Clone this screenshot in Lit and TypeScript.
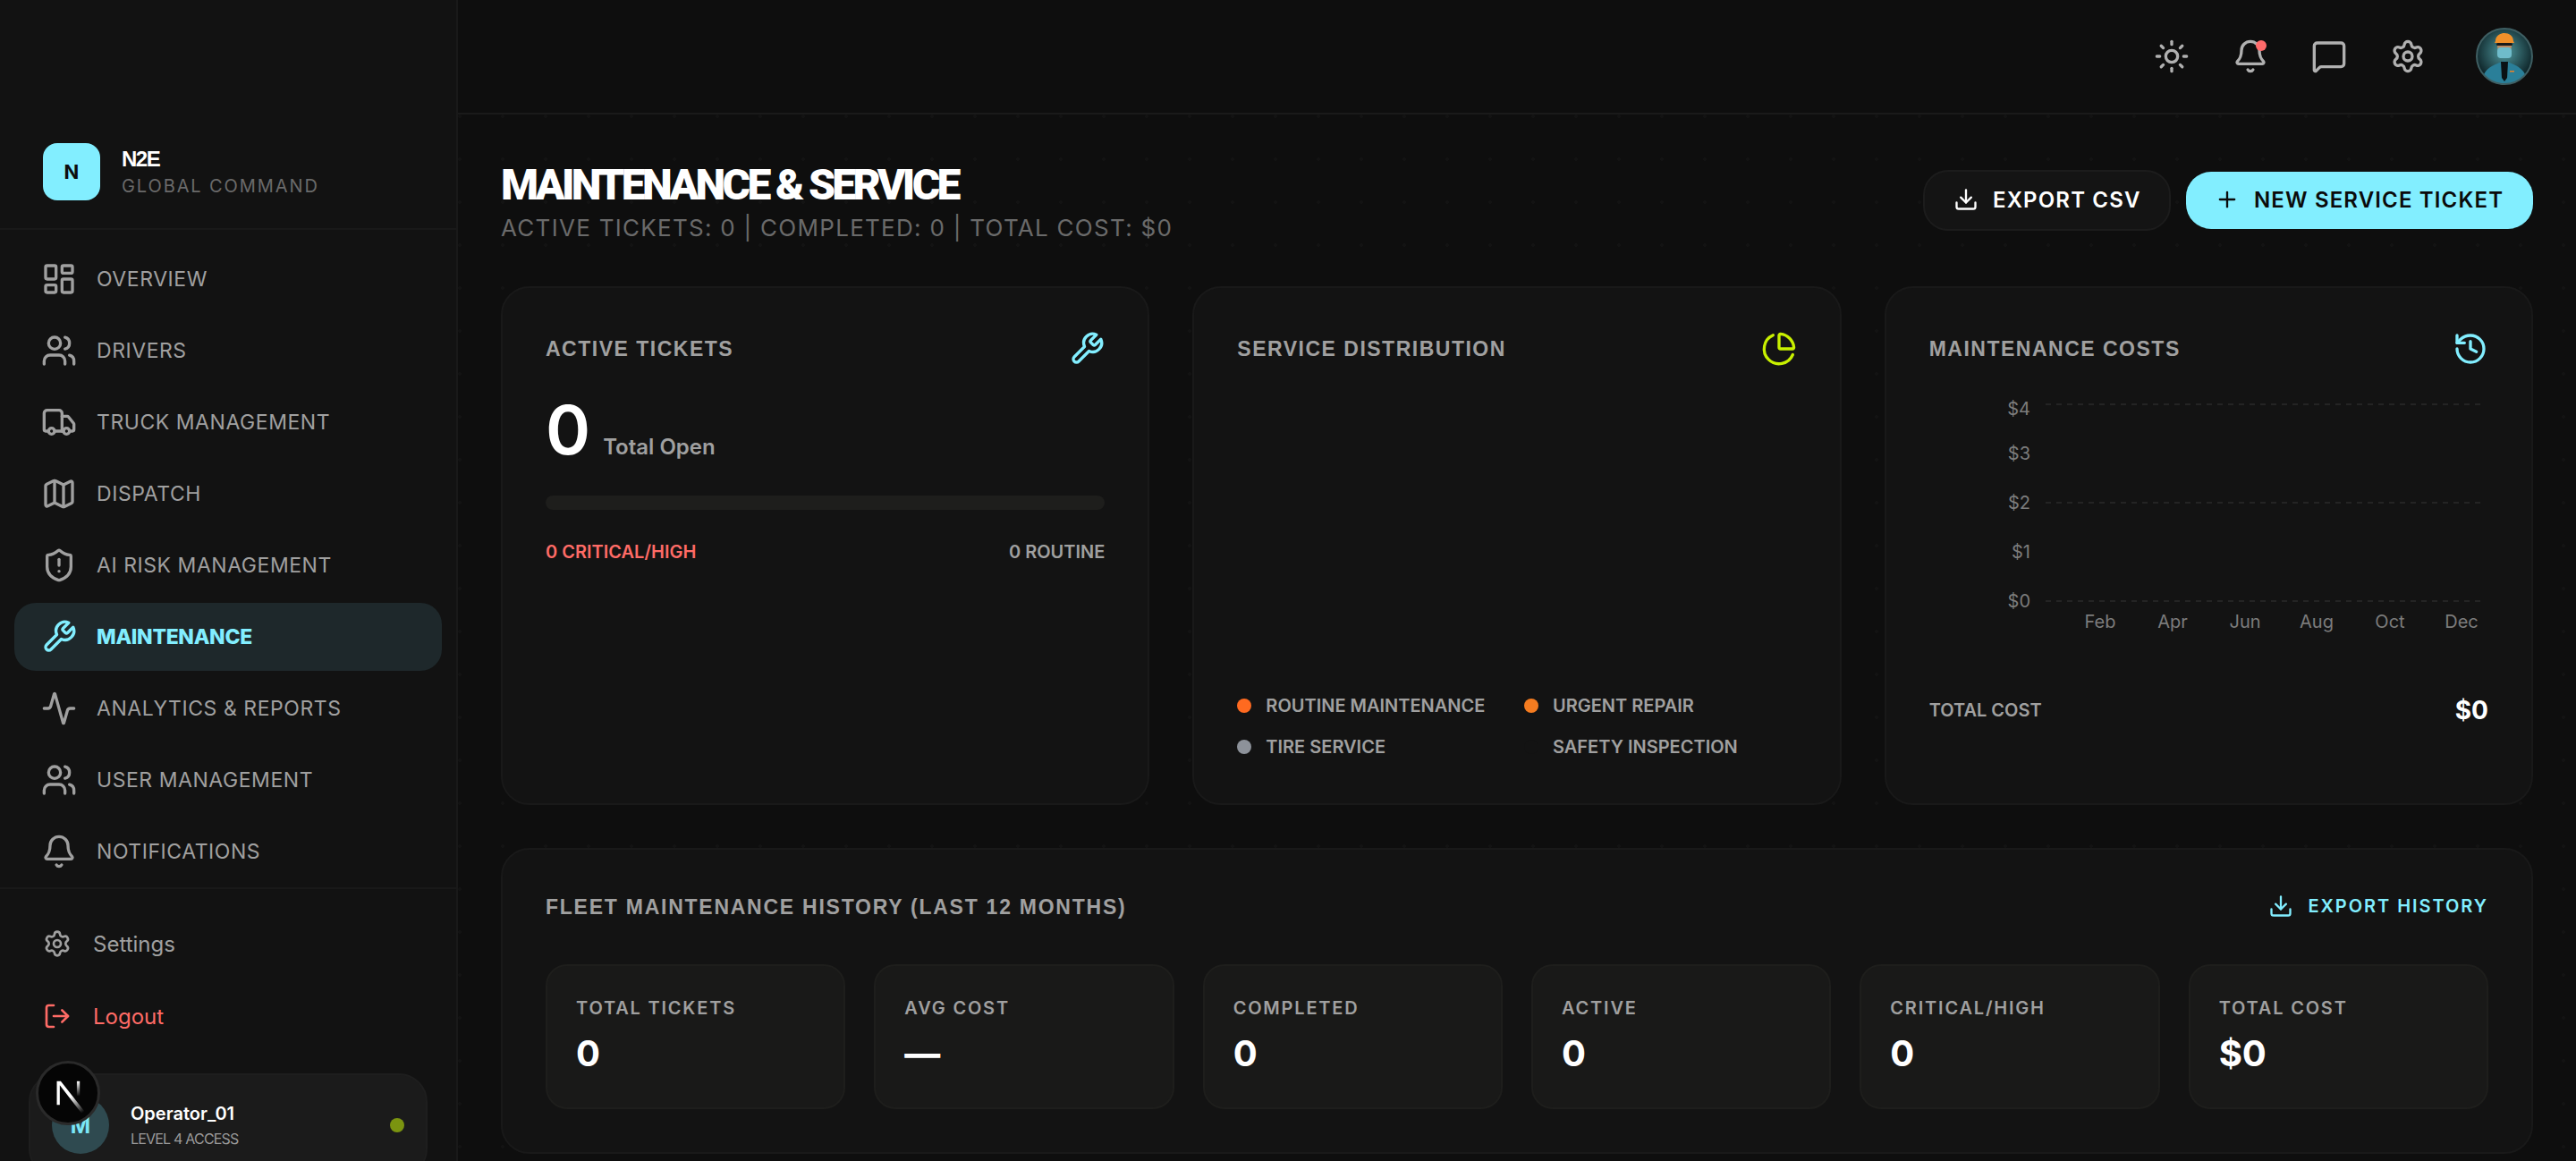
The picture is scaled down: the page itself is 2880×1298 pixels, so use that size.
import { LitElement, html, css, svg } from 'lit';
import { customElement } from 'lit/decorators.js';

const icons = {
  dashboard: svg`<rect width="7" height="9" x="3" y="3" rx="1"/><rect width="7" height="5" x="14" y="3" rx="1"/><rect width="7" height="9" x="14" y="12" rx="1"/><rect width="7" height="5" x="3" y="16" rx="1"/>`,
  users: svg`<path d="M16 21v-2a4 4 0 0 0-4-4H6a4 4 0 0 0-4 4v2"/><path d="M16 3.128a4 4 0 0 1 0 7.744"/><path d="M22 21v-2a4 4 0 0 0-3-3.87"/><circle cx="9" cy="7" r="4"/>`,
  truck: svg`<path d="M14 18V6a2 2 0 0 0-2-2H4a2 2 0 0 0-2 2v11a1 1 0 0 0 1 1h2"/><path d="M15 18H9"/><path d="M19 18h2a1 1 0 0 0 1-1v-3.65a1 1 0 0 0-.22-.624l-3.48-4.35A1 1 0 0 0 17.52 8H14"/><circle cx="17" cy="18" r="2"/><circle cx="7" cy="18" r="2"/>`,
  map: svg`<path d="M14.106 5.553a2 2 0 0 0 1.788 0l3.659-1.83A1 1 0 0 1 21 4.619v12.764a1 1 0 0 1-.553.894l-4.553 2.277a2 2 0 0 1-1.788 0l-4.212-2.106a2 2 0 0 0-1.788 0l-3.659 1.83A1 1 0 0 1 3 19.381V6.618a1 1 0 0 1 .553-.894l4.553-2.277a2 2 0 0 1 1.788 0z"/><path d="M15 5.764v15"/><path d="M9 3.236v15"/>`,
  shield: svg`<path d="M20 13c0 5-3.5 7.5-7.66 8.95a1 1 0 0 1-.67-.01C7.5 20.5 4 18 4 13V6a1 1 0 0 1 1-1c2 0 4.5-1.2 6.24-2.72a1.17 1.17 0 0 1 1.52 0C14.51 3.81 17 5 19 5a1 1 0 0 1 1 1z"/><path d="M12 8v4"/><path d="M12 16h.01"/>`,
  wrench: svg`<path d="M14.7 6.3a1 1 0 0 0 0 1.4l1.6 1.6a1 1 0 0 0 1.4 0l3.77-3.77a6 6 0 0 1-7.94 7.94l-6.91 6.91a2.12 2.12 0 0 1-3-3l6.91-6.91a6 6 0 0 1 7.94-7.94l-3.76 3.76z"/>`,
  activity: svg`<path d="M22 12h-2.48a2 2 0 0 0-1.93 1.46l-2.35 8.36a.25.25 0 0 1-.48 0L9.24 2.18a.25.25 0 0 0-.48 0l-2.35 8.36A2 2 0 0 1 4.49 12H2"/>`,
  bell: svg`<path d="M10.268 21a2 2 0 0 0 3.464 0"/><path d="M3.262 15.326A1 1 0 0 0 4 17h16a1 1 0 0 0 .74-1.673C19.41 13.956 18 12.499 18 8A6 6 0 0 0 6 8c0 4.499-1.411 5.956-2.738 7.326"/>`,
  settings: svg`<path d="M9.671 4.136a2.34 2.34 0 0 1 4.659 0 2.34 2.34 0 0 0 3.319 1.915 2.34 2.34 0 0 1 2.33 4.033 2.34 2.34 0 0 0 0 3.831 2.34 2.34 0 0 1-2.33 4.033 2.34 2.34 0 0 0-3.319 1.915 2.34 2.34 0 0 1-4.659 0 2.34 2.34 0 0 0-3.32-1.915 2.34 2.34 0 0 1-2.33-4.033 2.34 2.34 0 0 0 0-3.831A2.34 2.34 0 0 1 6.35 6.051a2.34 2.34 0 0 0 3.32-1.915"/><circle cx="12" cy="12" r="3"/>`,
  logout: svg`<path d="m16 17 5-5-5-5"/><path d="M21 12H9"/><path d="M9 21H5a2 2 0 0 1-2-2V5a2 2 0 0 1 2-2h4"/>`,
  sun: svg`<circle cx="12" cy="12" r="4"/><path d="M12 2v2"/><path d="M12 20v2"/><path d="m4.93 4.93 1.41 1.41"/><path d="m17.66 17.66 1.41 1.41"/><path d="M2 12h2"/><path d="M20 12h2"/><path d="m6.34 17.66-1.41 1.41"/><path d="m19.07 4.93-1.41 1.41"/>`,
  message: svg`<path d="M22 17a2 2 0 0 1-2 2H6.828a2 2 0 0 0-1.414.586l-2.202 2.202A.71.71 0 0 1 2 21.286V5a2 2 0 0 1 2-2h16a2 2 0 0 1 2 2z"/>`,
  download: svg`<path d="M12 15V3"/><path d="M21 15v4a2 2 0 0 1-2 2H5a2 2 0 0 1-2-2v-4"/><path d="m7 10 5 5 5-5"/>`,
  plus: svg`<path d="M5 12h14"/><path d="M12 5v14"/>`,
  pie: svg`<path d="M21 12c.552 0 1.005-.449.95-.998a10 10 0 0 0-8.953-8.951c-.55-.055-.998.398-.998.95v8a1 1 0 0 0 1 1z"/><path d="M21.21 15.89A10 10 0 1 1 8 2.83"/>`,
  history: svg`<path d="M3 12a9 9 0 1 0 9-9 9.75 9.75 0 0 0-6.74 2.74L3 8"/><path d="M3 3v5h5"/><path d="M12 7v5l4 2"/>`,
};

const icon = (name: keyof typeof icons, size: number) => html`<svg
  class="icon"
  width=${size}
  height=${size}
  viewBox="0 0 24 24"
  fill="none"
  stroke="currentColor"
  stroke-width="2"
  stroke-linecap="round"
  stroke-linejoin="round"
>${icons[name]}</svg>`;

const navItems: { label: string; icon: keyof typeof icons; active?: boolean }[] = [
  { label: 'Overview', icon: 'dashboard' },
  { label: 'Drivers', icon: 'users' },
  { label: 'Truck Management', icon: 'truck' },
  { label: 'Dispatch', icon: 'map' },
  { label: 'AI Risk Management', icon: 'shield' },
  { label: 'Maintenance', icon: 'wrench', active: true },
  { label: 'Analytics & Reports', icon: 'activity' },
  { label: 'User Management', icon: 'users' },
  { label: 'Notifications', icon: 'bell' },
];

const legend = [
  { label: 'Routine Maintenance', color: '#ff6a20' },
  { label: 'Urgent Repair', color: '#f57c20' },
  { label: 'Tire Service', color: '#8d929a' },
  { label: 'Safety Inspection', color: '#131313' },
];

const stats = [
  { label: 'Total Tickets', value: '0' },
  { label: 'Avg Cost', value: '—' },
  { label: 'Completed', value: '0' },
  { label: 'Active', value: '0' },
  { label: 'Critical/High', value: '0' },
  { label: 'Total Cost', value: '$0' },
];

const yTicks = [
  { label: '$4', y: 25 },
  { label: '$3', y: 75 },
  { label: '$2', y: 130 },
  { label: '$1', y: 185 },
  { label: '$0', y: 240 },
];
const months = [
  { label: 'Feb', x: 191 },
  { label: 'Apr', x: 272 },
  { label: 'Jun', x: 353 },
  { label: 'Aug', x: 433 },
  { label: 'Oct', x: 515 },
  { label: 'Dec', x: 595 },
];

@customElement('app-root')
export class AppRoot extends LitElement {
  static styles = css`
    :host {
      display: block;
      position: relative;
      height: 100vh;
      overflow: hidden;
      background: #0e0e0e;
      color: #fff;
      font-family: Inter, "Liberation Sans", sans-serif;
    }

    .layout {
      display: flex;
      height: 100%;
    }

    /* sidebar */
    .sidebar {
      width: 512px;
      flex: none;
      box-sizing: border-box;
      background: #121212;
      border-right: 2px solid #191919;
      display: flex;
      flex-direction: column;
      overflow: hidden;
    }
    .brand {
      display: flex;
      align-items: center;
      gap: 24px;
      padding: 160px 48px 31px;
      border-bottom: 2px solid #191919;
    }
    .brand-logo {
      width: 64px;
      height: 64px;
      border-radius: 16px;
      background: #82eeff;
      color: #0d0d0d;
      display: flex;
      align-items: center;
      justify-content: center;
      font-size: 22px;
      font-weight: 700;
    }
    .brand-name {
      font-family: "Liberation Sans", sans-serif;
      font-size: 24px;
      font-weight: 700;
      line-height: 28px;
      letter-spacing: -1.5px;
    }
    .brand-sub {
      font-size: 20px;
      line-height: 26px;
      letter-spacing: 1.9px;
      color: #6a6a6a;
      margin-top: 3px;
    }
    .nav {
      display: flex;
      flex-direction: column;
      gap: 4px;
      padding: 17px 16px 2px;
      border-bottom: 2px solid #191919;
    }
    .nav-item {
      display: flex;
      align-items: center;
      gap: 22px;
      height: 76px;
      padding-left: 30px;
      border-radius: 24px;
      color: #a0a0a0;
      font-size: 23px;
      letter-spacing: 0.55px;
      text-transform: uppercase;
    }
    .nav-item.active {
      background: #1e282b;
      color: #82eeff;
      font-weight: 800;
      letter-spacing: -0.3px;
    }
    .foot {
      padding: 23px 32px 0;
      display: flex;
      flex-direction: column;
      gap: 5px;
    }
    .foot-item {
      display: flex;
      align-items: center;
      gap: 24px;
      height: 76px;
      padding-left: 16px;
      color: #a0a0a0;
      font-size: 24px;
    }
    .foot-item.logout {
      color: #ff6b66;
    }
    .user {
      margin-top: 21px;
      height: 116px;
      box-sizing: border-box;
      background: #1b1b1b;
      border: 2px solid #1e1e1e;
      border-radius: 32px;
      display: flex;
      align-items: center;
      padding: 0 24px;
      flex: none;
    }
    .user-avatar {
      width: 64px;
      height: 64px;
      border-radius: 50%;
      background: #2f4a50;
      color: #7be7f7;
      font-size: 24px;
      font-weight: 700;
      display: flex;
      align-items: center;
      justify-content: center;
      flex: none;
    }
    .user-info {
      flex: 1;
      margin-left: 24px;
    }
    .user-name {
      font-size: 20px;
      font-weight: 600;
      line-height: 28px;
    }
    .user-level {
      font-size: 16px;
      line-height: 24px;
      letter-spacing: -0.8px;
      color: #9a9a9a;
      margin-top: 2px;
    }
    .user-dot {
      width: 16px;
      height: 16px;
      border-radius: 50%;
      background: #7b9410;
    }

    /* floating framework badge */
    .dev-badge {
      position: absolute;
      left: 40px;
      top: 1186px;
      width: 72px;
      height: 72px;
      box-sizing: border-box;
      border-radius: 50%;
      background: #050505;
      border: 3px solid #2a2a2a;
      display: flex;
      align-items: center;
      justify-content: center;
    }

    /* main column */
    .main {
      flex: 1;
      min-width: 0;
      display: flex;
      flex-direction: column;
    }
    .topbar {
      height: 128px;
      flex: none;
      box-sizing: border-box;
      border-bottom: 2px solid #1a1a1a;
      padding-right: 48px;
      display: flex;
      align-items: center;
      justify-content: flex-end;
      gap: 48px;
      color: #b0b0b0;
    }
    .bell {
      position: relative;
      display: flex;
    }
    .bell::after {
      content: "";
      position: absolute;
      top: 2px;
      right: 2px;
      width: 12px;
      height: 12px;
      border-radius: 50%;
      background: #ff6b6b;
    }
    .top-avatar {
      display: block;
      margin-left: 8px;
    }
    .icon {
      display: block;
      flex: none;
    }
    .content {
      flex: 1;
      padding: 48px 48px 0 48px;
      background-image: radial-gradient(circle at 2px 2px, #131313 2px, transparent 2px);
      background-size: 48px 48px;
    }

    .page-head {
      display: flex;
      justify-content: space-between;
      align-items: center;
      height: 96px;
      margin-bottom: 48px;
    }
    h1 {
      margin: 0;
      padding-top: 3px;
      font-family: Roboto, sans-serif;
      font-size: 48px;
      line-height: 56px;
      font-weight: 900;
      letter-spacing: -3.65px;
    }
    .subtitle {
      margin-top: 2px;
      font-size: 26px;
      line-height: 36px;
      letter-spacing: 1.28px;
      color: #6a6a6a;
    }
    .actions {
      display: flex;
      align-items: center;
      gap: 17px;
    }
    .btn {
      display: flex;
      align-items: center;
      gap: 16px;
      box-sizing: border-box;
      border-radius: 28px;
      padding-bottom: 2px;
      font-size: 24px;
      font-weight: 600;
      letter-spacing: 1.15px;
    }
    .btn.ghost {
      height: 68px;
      width: 277px;
      padding-left: 32px;
      background: #141414;
      border: 2px solid #1c1c1c;
      color: #fff;
    }
    .btn.primary {
      height: 64px;
      width: 388px;
      padding-left: 32px;
      background: #82eeff;
      color: #0b0b0b;
    }

    .cards {
      display: grid;
      grid-template-columns: repeat(3, 1fr);
      gap: 48px;
      margin-bottom: 48px;
    }
    .card {
      box-sizing: border-box;
      background: #131313;
      border: 2px solid #191919;
      border-radius: 32px;
      padding: 48px;
    }
    .cards .card {
      height: 580px;
      display: flex;
      flex-direction: column;
    }
    .card-head {
      display: flex;
      justify-content: space-between;
      align-items: center;
      height: 40px;
    }
    .card-title {
      font-family: "Liberation Sans", sans-serif;
      font-size: 23px;
      font-weight: 700;
      letter-spacing: 1.5px;
      color: #a0a0a0;
      text-transform: uppercase;
    }
    .cyan {
      color: #82eeff;
    }
    .lime {
      color: #c8f000;
    }

    .big {
      display: flex;
      align-items: baseline;
      gap: 14px;
      margin-top: 34px;
    }
    .big-value {
      font-size: 76px;
      line-height: 72px;
      font-weight: 600;
    }
    .big-label {
      font-size: 24px;
      font-weight: 600;
      color: #a0a0a0;
    }
    .bar {
      height: 16px;
      border-radius: 8px;
      background: #1e1e1c;
      margin-top: 38px;
    }
    .split {
      display: flex;
      justify-content: space-between;
      margin-top: 33px;
      font-size: 20px;
      line-height: 28px;
      font-weight: 600;
      color: #a0a0a0;
    }
    .danger {
      color: #ff6b66;
    }

    .legend {
      margin-top: auto;
      margin-bottom: 2px;
      display: grid;
      grid-template-columns: 1fr 1fr;
      gap: 20px 16px;
    }
    .legend-item {
      display: flex;
      align-items: center;
      gap: 16px;
      font-size: 20px;
      line-height: 26px;
      font-weight: 600;
      color: #a0a0a0;
      text-transform: uppercase;
    }
    .legend-dot {
      width: 16px;
      height: 16px;
      border-radius: 50%;
    }

    .chart {
      display: block;
      margin-top: 22px;
      font-family: Inter, sans-serif;
      font-size: 20px;
    }
    .chart text {
      fill: #7c7c7c;
    }
    .chart line {
      stroke: #242424;
      stroke-width: 2;
      stroke-dasharray: 6 6;
    }
    .cost-row {
      display: flex;
      justify-content: space-between;
      align-items: center;
      height: 36px;
      margin-top: 64px;
    }
    .cost-label {
      font-size: 20px;
      font-weight: 600;
      color: #a0a0a0;
    }
    .cost-value {
      font-size: 28px;
      font-weight: 700;
    }

    .history-head {
      display: flex;
      justify-content: space-between;
      align-items: center;
      height: 30px;
      margin-bottom: 50px;
    }
    .history-head .card-title {
      letter-spacing: 1.75px;
      margin-top: 2px;
    }
    .export-link {
      display: flex;
      align-items: center;
      gap: 16px;
      color: #82eeff;
      font-size: 20px;
      font-weight: 600;
      letter-spacing: 1.95px;
    }
    .stats {
      display: grid;
      grid-template-columns: repeat(6, 1fr);
      gap: 32px;
    }
    .stat {
      box-sizing: border-box;
      height: 162px;
      padding: 32px;
      background: #191918;
      border: 2px solid #1e1e1c;
      border-radius: 24px;
    }
    .stat-label {
      font-size: 20px;
      line-height: 30px;
      font-weight: 600;
      letter-spacing: 1.8px;
      color: #a0a0a0;
      text-transform: uppercase;
    }
    .stat-value {
      margin-top: 12px;
      font-size: 40px;
      line-height: 48px;
      font-weight: 700;
    }
  `;

  private renderAvatar() {
    return html`<svg class="top-avatar" width="64" height="64" viewBox="0 0 64 64">
      <defs>
        <radialGradient id="avBg" cx="50%" cy="42%" r="55%">
          <stop offset="0" stop-color="#4f999f" />
          <stop offset="1" stop-color="#0b1f23" />
        </radialGradient>
        <clipPath id="avClip"><circle cx="32" cy="32" r="31" /></clipPath>
      </defs>
      <g clip-path="url(#avClip)">
        <rect width="64" height="64" fill="url(#avBg)" />
        <path d="M6 64C7 46 18 42 32 37C46 42 57 46 58 64Z" fill="#2a7f99" />
        <path d="M28 38H36L35 56L32 60L29 56Z" fill="#0a1114" />
        <ellipse cx="32" cy="21" rx="8" ry="9" fill="#b98a63" />
        <rect x="24" y="22" width="16" height="12" rx="4" fill="#6fbccb" />
        <rect x="23" y="17" width="18" height="3" rx="1.5" fill="#1a1a1a" />
        <path d="M22 15C22 3 42 3 42 15L43 17H21Z" fill="#f0902a" />
        <rect x="38" y="48" width="5" height="1.5" fill="#e8832a" />
      </g>
      <circle cx="32" cy="32" r="31" fill="none" stroke="#3f5f63" stroke-width="2" />
    </svg>`;
  }

  private renderNextMark() {
    return html`<svg width="66" height="66" viewBox="0 0 180 180" fill="none">
      <defs>
        <linearGradient id="nDiag" x1="100" y1="100" x2="135" y2="150" gradientUnits="userSpaceOnUse">
          <stop stop-color="#fff" />
          <stop offset="1" stop-color="#fff" stop-opacity="0" />
        </linearGradient>
        <linearGradient id="nStem" x1="121" y1="54" x2="121" y2="100" gradientUnits="userSpaceOnUse">
          <stop stop-color="#fff" />
          <stop offset="1" stop-color="#fff" stop-opacity="0" />
        </linearGradient>
      </defs>
      <path d="M149 157L68 54H56V126H65V66L140 163Z" fill="url(#nDiag)" />
      <rect x="117" y="54" width="9" height="72" fill="url(#nStem)" />
    </svg>`;
  }

  render() {
    return html`
      <div class="layout">
        <aside class="sidebar">
          <div class="brand">
            <div class="brand-logo">N</div>
            <div>
              <div class="brand-name">N2E</div>
              <div class="brand-sub">GLOBAL COMMAND</div>
            </div>
          </div>
          <nav class="nav">
            ${navItems.map(
              (n) => html`<div class="nav-item ${n.active ? 'active' : ''}">${icon(n.icon, 40)}<span>${n.label}</span></div>`
            )}
          </nav>
          <div class="foot">
            <div class="foot-item">${icon('settings', 32)}<span>Settings</span></div>
            <div class="foot-item logout">${icon('logout', 32)}<span>Logout</span></div>
            <div class="user">
              <div class="user-avatar">M</div>
              <div class="user-info">
                <div class="user-name">Operator_01</div>
                <div class="user-level">LEVEL 4 ACCESS</div>
              </div>
              <div class="user-dot"></div>
            </div>
          </div>
        </aside>

        <div class="main">
          <header class="topbar">
            ${icon('sun', 40)}
            <span class="bell">${icon('bell', 40)}</span>
            ${icon('message', 40)}
            ${icon('settings', 40)}
            ${this.renderAvatar()}
          </header>

          <main class="content">
            <div class="page-head">
              <div>
                <h1>MAINTENANCE &amp; SERVICE</h1>
                <div class="subtitle">ACTIVE TICKETS: 0 | COMPLETED: 0 | TOTAL COST: $0</div>
              </div>
              <div class="actions">
                <div class="btn ghost">${icon('download', 28)}<span>EXPORT CSV</span></div>
                <div class="btn primary">${icon('plus', 28)}<span>NEW SERVICE TICKET</span></div>
              </div>
            </div>

            <div class="cards">
              <section class="card">
                <div class="card-head">
                  <div class="card-title">Active Tickets</div>
                  <span class="cyan">${icon('wrench', 40)}</span>
                </div>
                <div class="big">
                  <span class="big-value">0</span>
                  <span class="big-label">Total Open</span>
                </div>
                <div class="bar"></div>
                <div class="split">
                  <span class="danger">0 CRITICAL/HIGH</span>
                  <span>0 ROUTINE</span>
                </div>
              </section>

              <section class="card">
                <div class="card-head">
                  <div class="card-title">Service Distribution</div>
                  <span class="lime">${icon('pie', 40)}</span>
                </div>
                <div class="legend">
                  ${legend.map(
                    (l) => html`<div class="legend-item">
                      <span class="legend-dot" style="background:${l.color}"></span>${l.label}
                    </div>`
                  )}
                </div>
              </section>

              <section class="card">
                <div class="card-head">
                  <div class="card-title">Maintenance Costs</div>
                  <span class="cyan">${icon('history', 40)}</span>
                </div>
                <svg class="chart" width="625" height="280" viewBox="0 0 625 280">
                  <line x1="130" x2="616" y1="20" y2="20"></line>
                  <line x1="130" x2="616" y1="130" y2="130"></line>
                  <line x1="130" x2="616" y1="240" y2="240"></line>
                  ${yTicks.map((t) => svg`<text x="113" y=${t.y + 7} text-anchor="end">${t.label}</text>`)}
                  ${months.map((m) => svg`<text x=${m.x} y="270" text-anchor="middle">${m.label}</text>`)}
                </svg>
                <div class="cost-row">
                  <span class="cost-label">TOTAL COST</span>
                  <span class="cost-value">$0</span>
                </div>
              </section>
            </div>

            <section class="card">
              <div class="history-head">
                <div class="card-title">Fleet Maintenance History (Last 12 Months)</div>
                <div class="export-link">${icon('download', 28)}<span>EXPORT HISTORY</span></div>
              </div>
              <div class="stats">
                ${stats.map(
                  (s) => html`<div class="stat">
                    <div class="stat-label">${s.label}</div>
                    <div class="stat-value">${s.value}</div>
                  </div>`
                )}
              </div>
            </section>
          </main>
        </div>
      </div>
      <div class="dev-badge">${this.renderNextMark()}</div>
    `;
  }
}
